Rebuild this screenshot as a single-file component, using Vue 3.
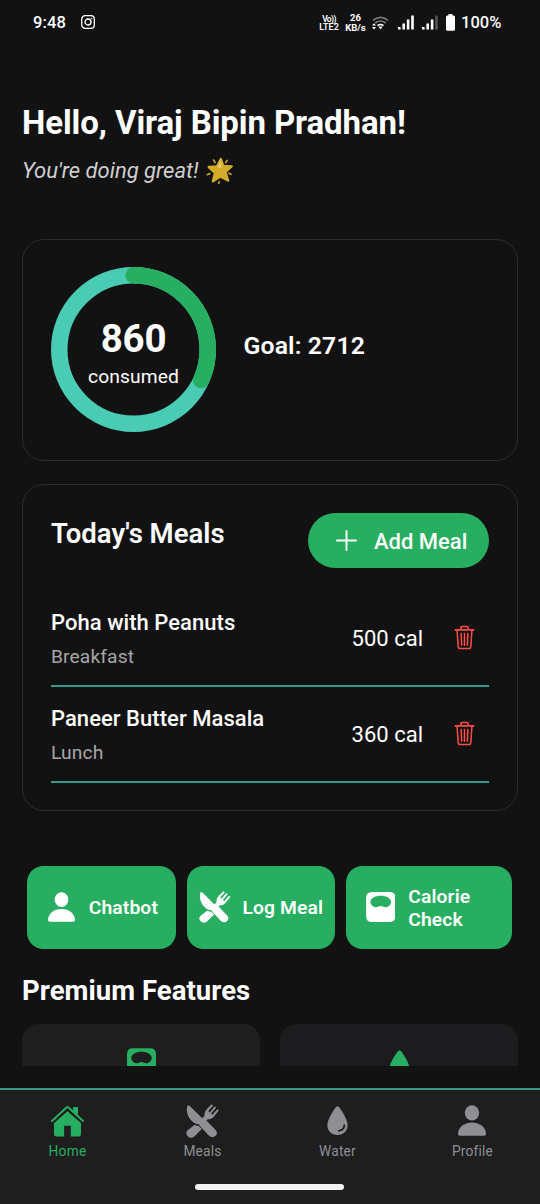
<script setup>
import { h } from 'vue'

const meals = [
  { name: 'Poha with Peanuts', type: 'Breakfast', cal: 500 },
  { name: 'Paneer Butter Masala', type: 'Lunch', cal: 360 },
]
const consumed = 860
const goal = 2712
const radius = 74.25
const circumference = 2 * Math.PI * radius
const dash = `${(circumference * consumed) / goal} ${circumference}`

const glyphs = {
  person: {
    box: '0 0 84 92',
    parts: [
      ['ellipse', { cx: 42, cy: 23, rx: 21.5, ry: 23 }],
      ['path', { d: 'M42 52C66 52 84 67 84 86Q84 92 78 92H6Q0 92 0 86C0 67 18 52 42 52Z' }],
    ],
  },
  utensils: {
    box: '0 0 96 98',
    parts: [
      ['path', { d: 'M4 5Q7 1 11 5L48 42L58 46L86 75Q94 84 86 92Q77 100 67 92L44 67L38 59Q28 59 20 52C5 39-1 20 4 5Z' }],
      ['path', { d: 'M46 42L54 34C52 26 56 20 61 14L73 2Q75 0 77 2Q79 4 77 6L65 20L69 24L82 8Q84 6 86 8Q88 10 86 12L73 27L77 31L90 16Q92 14 94 16Q96 18 94 20L82 35C76 42 70 45 63 44L56 52Z' }],
      ['path', { d: 'M25 60Q32 64 37 63L46 72L25 93Q14 102 5 93Q-4 84 5 76Z' }],
    ],
  },
  scale: {
    box: '0 0 88 90',
    parts: [
      ['path', { 'fill-rule': 'evenodd', d: 'M18 0H70Q88 0 88 18V72Q88 90 70 90H18Q0 90 0 72V18Q0 0 18 0ZM44 11C27 11 13 19 13 30C13 38 22 46 29 46C35 46 37 42 44 42C51 42 53 46 59 46C66 46 75 38 75 30C75 19 61 11 44 11Z' }],
    ],
  },
  home: {
    box: '0 0 98 94',
    parts: [
      ['path', { d: 'M49 18L89 53V86Q89 93 82 93H59V61H39V93H16Q9 93 9 86V53Z' }],
      ['path', { d: 'M65 17V6H80V31Z' }],
      ['path', { d: 'M3 48L46 8Q49 5 52 8L95 48', fill: 'none', stroke: '#1e1e1e', 'stroke-width': 12, 'stroke-linejoin': 'round' }],
      ['path', { d: 'M66 22V6H80V34Z' }],
      ['path', { d: 'M3 47L46 7Q49 4 52 7L95 47', fill: 'none', stroke: 'currentColor', 'stroke-width': 6, 'stroke-linecap': 'round', 'stroke-linejoin': 'round' }],
    ],
  },
  drop: {
    box: '0 0 62 86',
    parts: [
      ['path', { 'fill-rule': 'evenodd', d: 'M27 3Q31-2 35 3C44 14 61 40 61 57C61 74 48 86 31 86S1 74 1 57C1 40 18 14 27 3ZM49 55C49 65 42 71 34 71Q31 73 34 76C45 76 54 68 54 57Q52 52 49 55Z' }],
    ],
  },
}

const Glyph = (props) =>
  h('svg', { viewBox: glyphs[props.name].box, fill: 'currentColor', 'aria-hidden': 'true' },
    glyphs[props.name].parts.map(([tag, attrs]) => h(tag, attrs)))
Glyph.props = ['name']

const actions = [
  { label: 'Chatbot', icon: 'person' },
  { label: 'Log Meal', icon: 'utensils' },
  { label: 'Calorie Check', icon: 'scale' },
]
const tabs = [
  { label: 'Home', icon: 'home', active: true },
  { label: 'Meals', icon: 'utensils' },
  { label: 'Water', icon: 'drop' },
  { label: 'Profile', icon: 'person' },
]
</script>

<template>
  <div class="screen">
    <header class="status">
      <span class="time">9:48</span>
      <svg class="insta" viewBox="0 0 14 14" fill="none" stroke="#fff" stroke-width="1.3">
        <rect x="0.7" y="0.7" width="12.6" height="12.6" rx="3.4" />
        <circle cx="7" cy="7" r="3" />
        <circle cx="10.5" cy="3.5" r="0.5" fill="#fff" stroke-width="0.5" />
      </svg>
      <span class="mini lte"><span class="vo">Vo))</span><span>LTE2</span></span>
      <span class="mini rate"><span>26</span><span>KB/s</span></span>
      <svg class="wifi" viewBox="0 0 17 14" fill="none" stroke-width="1.7">
        <path d="M1 4.3Q8.5-1.7 16 4.3M3.2 7Q8.5 3 13.8 7" stroke="#777" />
        <path d="M5.5 9.6Q8.5 7.4 11.5 9.6" stroke="#fff" />
        <path d="M6.4 10.6L8.5 13.6L10.6 10.6Z" fill="#fff" />
        <path d="M0 9.6L2 7.2L4 9.6ZM0 11L2 13.4L4 11Z" fill="#fff" />
      </svg>
      <svg class="signal first" viewBox="0 0 16 15" fill="#fff">
        <path d="M0 12h2.6v2.6H0zM4.4 8.5H7v6.1H4.4zM8.8 4.5h2.6v10.1H8.8zM13.2 0.6h2.6v14h-2.6z" />
      </svg>
      <svg class="signal" viewBox="0 0 16 15" fill="#fff">
        <path d="M0 12h2.6v2.6H0zM4.4 8.5H7v6.1H4.4zM8.8 4.5h2.6v10.1H8.8z" />
        <path d="M13.2 0.6h2.6v14h-2.6z" fill="#555" />
      </svg>
      <svg class="battery" viewBox="0 0 9 17" fill="#fff">
        <path d="M2.5 0h4v1.5H7.5Q9 1.5 9 3V15.3Q9 16.8 7.5 16.8H1.5Q0 16.8 0 15.3V3Q0 1.5 1.5 1.5H2.5Z" />
      </svg>
      <span class="pct">100%</span>
    </header>

    <main class="content">
      <h1>Hello, Viraj Bipin Pradhan!</h1>
      <p class="tagline">
        <span>You're doing great!</span>
        <svg class="star" viewBox="0 0 78 78">
          <path d="M43 6L50 26L74 27L56 43L64 68L41 56L20 70L26 46L8 29L32 27Z" fill="#d3ac2b" stroke="#d3ac2b" stroke-width="7" stroke-linejoin="round" />
          <path d="M43 8L45 33L33 30Z" fill="#e5cd65" />
          <g stroke="#c79d2c" stroke-width="5" stroke-linecap="round">
            <path d="M22 9L26 16M61 10L57 16M4 51L11 48M72 50L66 47M38 72L37 76" />
          </g>
        </svg>
      </p>

      <section class="card summary">
        <div class="ring">
          <svg viewBox="0 0 165 165" fill="none" stroke-width="16.5">
            <circle cx="82.5" cy="82.5" :r="radius" stroke="#4accb4" />
            <circle cx="82.5" cy="82.5" :r="radius" stroke="#27ae60" stroke-linecap="round" :stroke-dasharray="dash" transform="rotate(-90 82.5 82.5)" />
          </svg>
          <div class="ring-text">
            <strong>{{ consumed }}</strong>
            <span>consumed</span>
          </div>
        </div>
        <div class="goal">Goal: {{ goal }}</div>
      </section>

      <section class="card meals">
        <div class="meals-head">
          <h2>Today's Meals</h2>
          <button class="add">
            <svg viewBox="0 0 21 21" fill="none" stroke="#fff" stroke-width="1.9" stroke-linecap="round"><path d="M10.5 1v19M1 10.5h19" /></svg>
            <span>Add Meal</span>
          </button>
        </div>
        <div v-for="m in meals" :key="m.name" class="meal">
          <div class="meal-info">
            <div class="meal-name">{{ m.name }}</div>
            <div class="meal-type">{{ m.type }}</div>
          </div>
          <span class="cal">{{ m.cal }} cal</span>
          <svg class="trash" viewBox="0 0 22 26" fill="none" stroke="#ff4d4d" stroke-width="1.6" stroke-linecap="round" stroke-linejoin="round">
            <path d="M1.2 5H20.8M3.2 5L4.4 22.5Q4.6 24.6 6.6 24.6H15.4Q17.4 24.6 17.6 22.5L18.8 5M7.2 5V3Q7.2 1.4 8.8 1.4H13.2Q14.8 1.4 14.8 3V5M7.5 8.8L8 21M11 8.8V21M14.5 8.8L14 21" />
          </svg>
        </div>
      </section>

      <nav class="actions">
        <button v-for="a in actions" :key="a.label" class="action" :class="a.icon">
          <Glyph :name="a.icon" class="action-icon" />
          <span>{{ a.label }}</span>
        </button>
      </nav>

      <h2 class="premium">Premium Features</h2>
      <div class="features">
        <div class="feature"><Glyph name="scale" class="f-scale" /></div>
        <div class="feature cool"><Glyph name="drop" class="f-drop" /></div>
      </div>
    </main>

    <footer class="tabbar">
      <div class="tabs">
        <div v-for="t in tabs" :key="t.label" class="tab" :class="{ active: t.active }">
          <div class="tab-icon"><Glyph :name="t.icon" :class="'t-' + t.icon" /></div>
          <span>{{ t.label }}</span>
        </div>
      </div>
      <div class="handle"></div>
    </footer>
  </div>
</template>

<style>
body { margin: 0; background: #121212; }
</style>

<style scoped>
.screen {
  width: 540px;
  height: 1204px;
  overflow: hidden;
  display: flex;
  flex-direction: column;
  background: #121212;
  color: #fff;
  font-family: Roboto, "Noto Sans", sans-serif;
}
* { box-sizing: border-box; }
svg { display: block; flex: none; }
button { border: 0; font: inherit; color: inherit; }
h1, h2, p { margin: 0; }

.status { height: 45px; padding-left: 33px; display: flex; align-items: center; flex: none; }
.time { width: 48px; font-size: 16.5px; font-weight: 500; letter-spacing: 0.15px; }
.insta { width: 14px; height: 14px; margin: 0 224px 1px 0; }
.mini { display: flex; flex-direction: column; align-items: center; font-weight: 700; white-space: nowrap; }
.lte { width: 20px; margin-right: 6px; font-size: 9px; line-height: 8px; font-weight: 600; }
.vo { font-size: 8.5px; letter-spacing: -0.6px; }
.rate { width: 21px; margin-right: 6px; font-size: 9.5px; line-height: 10px; }
.wifi { width: 17px; height: 14px; margin-right: 8px; }
.signal { width: 16px; height: 15px; margin: 0 8px 1px 0; }
.signal.first { margin-left: 1px; }
.battery { width: 9px; height: 17px; margin: 0 6px 1px 0; }
.pct { font-size: 16.5px; font-weight: 500; white-space: nowrap; }

.content { height: 1021px; padding: 59px 22px 0; overflow: hidden; display: flex; flex-direction: column; flex: none; }
h1 { font-size: 33px; line-height: 38px; font-weight: 700; letter-spacing: -0.09px; white-space: nowrap; }
.tagline { margin-top: 16px; height: 26px; display: flex; align-items: center; gap: 7px; font-size: 22px; line-height: 26px; font-style: italic; color: #cfcfcf; white-space: nowrap; }
.star { width: 27px; height: 27px; margin-bottom: 1px; }

.card { border: 1px solid #2c2c2c; border-radius: 22px; flex: none; }
.summary { margin-top: 55px; height: 222px; padding: 27px 28px 28px; display: flex; gap: 27.5px; align-items: center; }
.ring { position: relative; width: 165px; height: 165px; }
.ring svg { width: 165px; height: 165px; }
.ring-text { position: absolute; inset: 0; display: flex; flex-direction: column; align-items: center; padding-top: 49px; }
.ring-text strong { font-size: 38.5px; line-height: 45px; font-weight: 700; letter-spacing: -0.2px; }
.ring-text span { font-size: 19.25px; line-height: 23px; margin-top: 4px; letter-spacing: 0.1px; }
.goal { font-size: 24.75px; line-height: 30px; font-weight: 600; margin-bottom: 8px; letter-spacing: 0.14px; }

.meals { margin-top: 23px; height: 327px; padding: 28px; }
.meals-head { height: 78px; display: flex; justify-content: space-between; align-items: flex-start; }
h2 { font-size: 27.5px; line-height: 32px; font-weight: 700; white-space: nowrap; }
.meals-head h2 { margin-top: 5px; font-weight: 600; }
.add { width: 181px; height: 55px; border-radius: 28px; background: #27ae60; padding: 0 0 0 28px; display: flex; align-items: center; gap: 17px; font-size: 22px; font-weight: 500; white-space: nowrap; }
.add svg { width: 21px; height: 21px; }
.add span { padding-top: 2px; }
.meal { height: 96px; border-bottom: 2px solid #3b9884; display: flex; align-items: center; padding-right: 14px; }
.meal-info { flex: 1; padding-top: 2px; }
.meal-name { font-size: 22px; line-height: 26px; font-weight: 500; letter-spacing: 0.04px; white-space: nowrap; }
.meal-type { font-size: 19.25px; line-height: 23px; margin-top: 9px; letter-spacing: 0.1px; color: #a6a6a6; }
.cal { font-size: 22px; margin-right: 31px; padding-top: 1px; }
.trash { width: 21px; height: 25px; margin-bottom: 1px; }

.actions { margin: 55px 0 0 5.4px; display: flex; gap: 11px; }
.action { width: 148.5px; height: 83px; padding: 0; border-radius: 16.5px; background: #27ae60; display: flex; align-items: center; font-size: 19.25px; line-height: 22.5px; font-weight: 600; text-align: left; white-space: nowrap; flex: none; }
.action span { padding-top: 2px; letter-spacing: 0.14px; }
.action.person { padding-left: 20.3px; }
.action.person svg { width: 27px; height: 30px; margin: 0 14px 1px 0; }
.action.utensils { padding-left: 12px; }
.action.utensils svg { width: 31.5px; height: 32px; margin: 0 12px 1px 0; }
.action.scale { width: 166px; padding-left: 19.3px; white-space: normal; }
.action.scale svg { width: 29.5px; height: 30px; margin: 0 13px 2px 0; }
.action.scale span { width: 80px; }
.premium { margin-top: 26px; letter-spacing: 0.05px; }
.features { margin-top: 17px; display: flex; gap: 20px; }
.feature { flex: 1; height: 140px; border-radius: 16.5px; background: #1e1e1e; display: flex; justify-content: center; padding-top: 24px; color: #27ae60; }
.cool { background: #1c1c1e; }
.f-scale { width: 29px; height: 30px; }
.f-drop { width: 21px; height: 29px; margin-top: 2px; }

.tabbar { margin-top: 22px; height: 116px; border-top: 2px solid #3b9884; background: #1e1e1e; flex: none; }
.tabs { display: flex; }
.tab { flex: 1; display: flex; flex-direction: column; align-items: center; color: #8e8e93; font-size: 13.75px; line-height: 16px; letter-spacing: 0.2px; padding-top: 14px; }
.tab.active { color: #27ae60; }
.tab-icon { height: 34px; display: flex; align-items: center; justify-content: center; margin-bottom: 5px; }
.t-home { width: 33px; height: 32px; }
.t-utensils { width: 33px; height: 34px; }
.t-drop { width: 21px; height: 29px; }
.t-person { width: 28px; height: 31px; }
.tab-icon svg { margin: 0 1px 1px 0; }
.handle { width: 149px; height: 6px; border-radius: 3px; background: #f2f2f2; margin: 25px auto 0; position: relative; left: -0.5px; }
</style>
